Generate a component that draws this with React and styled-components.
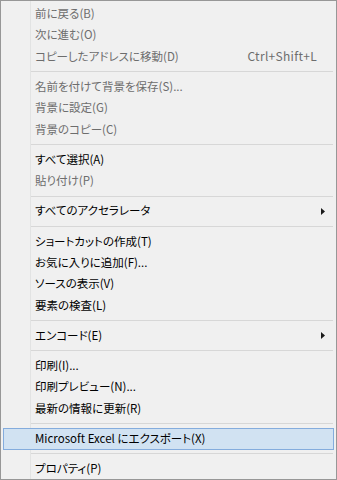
import React from 'react';
import styled, { createGlobalStyle } from 'styled-components';

const GlobalStyle = createGlobalStyle`
  html, body {
    margin: 0;
    padding: 0;
    background: #ffffff;
  }
  body {
    font-family: "Noto Sans CJK JP", "Noto Sans", sans-serif;
  }
`;

const Menu = styled.div`
  box-sizing: border-box;
  width: 337px;
  height: 480px;
  border: 1px solid #979797;
  background-color: #f0f0f0;
  background-image: linear-gradient(#e2e3e3, #e2e3e3);
  background-size: 1px 100%;
  background-position: 29px 0;
  background-repeat: no-repeat;
  padding: 2px 0 2px;
  display: flex;
  flex-direction: column;
`;

const Item = styled.div`
  box-sizing: border-box;
  height: 21.4px;
  flex: none;
  margin: 0 2px;
  padding: 0 8px 0 31px;
  border: 1px solid ${(p) => (p.$active ? '#84acdd' : 'transparent')};
  background: ${(p) => (p.$active ? '#d1e2f2' : 'transparent')};
  display: grid;
  grid-template-columns: 1fr auto 8px;
  align-items: center;
  font-size: 11.5px;
  font-feature-settings: "palt";
  line-height: 1;
  color: ${(p) => (p.$disabled ? '#6d6d6d' : '#000000')};
  white-space: nowrap;
`;

const Shortcut = styled.span`
  justify-self: end;
  font-size: 12px;
  letter-spacing: 0.3px;
`;

const Arrow = styled.span`
  display: flex;
  justify-content: flex-end;
`;

const Separator = styled.div`
  height: 1px;
  margin: 3.9px 3px 3.9px 30px;
  background: #d7d7d7;
  flex: none;
`;

const SubArrow = () => (
  <svg width="4" height="7" viewBox="0 0 4 7">
    <polygon points="0,0 4,3.5 0,7" fill="#1a1a1a" />
  </svg>
);

const groups = [
  [
    { label: '前に戻る(B)', disabled: true },
    { label: '次に進む(O)', disabled: true },
    { label: 'コピーしたアドレスに移動(D)', disabled: true, shortcut: 'Ctrl+Shift+L' },
  ],
  [
    { label: '名前を付けて背景を保存(S)...', disabled: true },
    { label: '背景に設定(G)', disabled: true },
    { label: '背景のコピー(C)', disabled: true },
  ],
  [
    { label: 'すべて選択(A)' },
    { label: '貼り付け(P)', disabled: true },
  ],
  [{ label: 'すべてのアクセラレータ', sub: true }],
  [
    { label: 'ショートカットの作成(T)' },
    { label: 'お気に入りに追加(F)...' },
    { label: 'ソースの表示(V)' },
    { label: '要素の検査(L)' },
  ],
  [{ label: 'エンコード(E)', sub: true }],
  [
    { label: '印刷(I)...' },
    { label: '印刷プレビュー(N)...' },
    { label: '最新の情報に更新(R)' },
  ],
  [{ label: 'Microsoft Excel にエクスポート(X)', active: true }],
  [{ label: 'プロパティ(P)' }],
];

const App = () => (
  <>
    <GlobalStyle />
    <Menu>
      {groups.map((group, gi) => (
        <React.Fragment key={gi}>
          {gi > 0 && <Separator />}
          {group.map((item) => (
            <Item key={item.label} $disabled={item.disabled} $active={item.active}>
              <span>{item.label}</span>
              <Shortcut>{item.shortcut}</Shortcut>
              <Arrow>{item.sub && <SubArrow />}</Arrow>
            </Item>
          ))}
        </React.Fragment>
      ))}
    </Menu>
  </>
);

export default App;
